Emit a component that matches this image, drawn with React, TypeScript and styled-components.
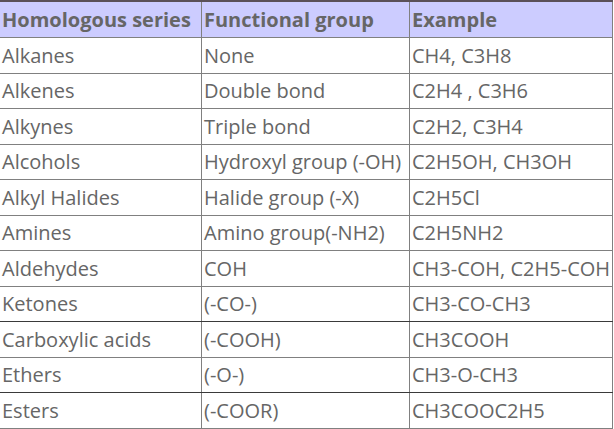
import { createGlobalStyle, styled } from "styled-components";

const rows: [string, string, string][] = [
  ["Alkanes", "None", "CH4, C3H8"],
  ["Alkenes", "Double bond", "C2H4 , C3H6"],
  ["Alkynes", "Triple bond", "C2H2, C3H4"],
  ["Alcohols", "Hydroxyl group (-OH)", "C2H5OH, CH3OH"],
  ["Alkyl Halides", "Halide group (-X)", "C2H5Cl"],
  ["Amines", "Amino group(-NH2)", "C2H5NH2"],
  ["Aldehydes", "COH", "CH3-COH, C2H5-COH"],
  ["Ketones", "(-CO-)", "CH3-CO-CH3"],
  ["Carboxylic acids", "(-COOH)", "CH3COOH"],
  ["Ethers", "(-O-)", "CH3-O-CH3"],
  ["Esters", "(-COOR)", "CH3COOC2H5"],
];

// rows with a darker rule under them in the picture
const darkRules = [7, 9];

export default function App() {
  return (
    <>
      <GlobalStyle />
      <Table>
        <colgroup>
          <col style={{ width: 202 }} />
          <col style={{ width: 208 }} />
          <col style={{ width: 203 }} />
        </colgroup>
        <thead>
          <tr>
            <Th>Homologous series</Th>
            <Th>Functional group</Th>
            <Th>Example</Th>
          </tr>
        </thead>
        <tbody>
          {rows.map((r, i) => (
            <Row key={r[0]} $dark={darkRules.includes(i)}>
              <Td>{r[0]}</Td>
              <Td>{r[1]}</Td>
              <Td>{r[2]}</Td>
            </Row>
          ))}
        </tbody>
      </Table>
    </>
  );
}

const GlobalStyle = createGlobalStyle`
  html, body {
    margin: 0;
    padding: 0;
    background: #ffffff;
    overflow: hidden;
  }
`;

const Table = styled.table`
  border-collapse: collapse;
  table-layout: fixed;
  width: 614px;
  margin-left: -1px;
  font-family: "Open Sans", "Liberation Sans", sans-serif;
  font-size: 20px;
  color: #666666;
`;

const Th = styled.th`
  background: #ccccff;
  font-weight: 700;
  text-align: left;
  height: 35px;
  padding: 0 2px;
  border: 1px solid #808080;
  border-top: 2px solid #5a5058;
  white-space: nowrap;
  overflow: hidden;
`;

const Row = styled.tr<{ $dark: boolean }>`
  & > td {
    border-bottom: 1px solid ${p => (p.$dark ? "#3a3a3a" : "#808080")};
  }
`;

const Td = styled.td`
  height: 34.5px;
  padding: 0 2px;
  border: 1px solid #808080;
  white-space: nowrap;
  overflow: hidden;
`;
